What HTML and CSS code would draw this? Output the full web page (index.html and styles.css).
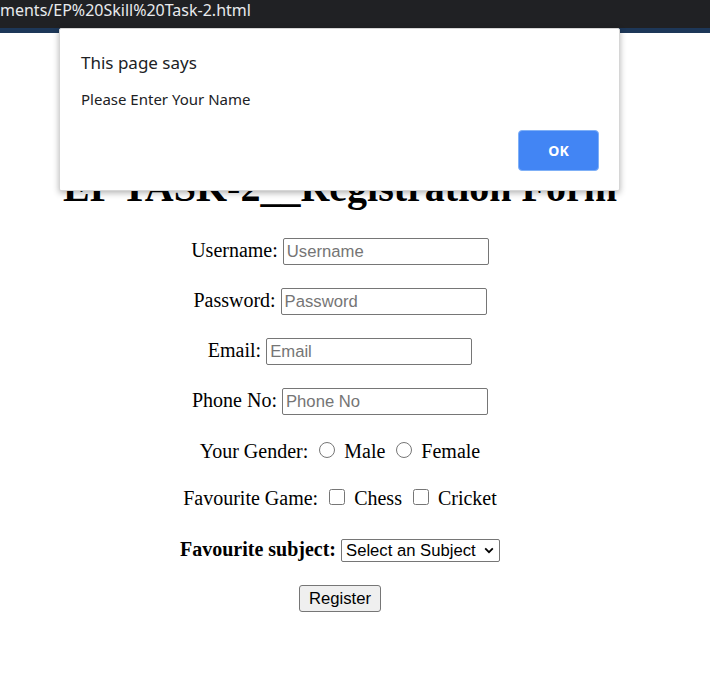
FILE: index.html
```html
<!DOCTYPE html>
<html lang="en">
<head>
<meta charset="utf-8">
<title>EP Skill Task-2</title>
<link rel="stylesheet" href="styles.css">
</head>
<body>
<div class="chrome"><span class="url">ments/EP%20Skill%20Task-2.html</span></div>
<div class="strip"></div>
<main class="page">
  <h1 class="title">EP TASK-2__Registration Form</h1>
  <form class="form">
    <p class="row row-field"><label>Username:</label> <input class="field" type="text" placeholder="Username"></p>
    <p class="row row-field"><label>Password:</label> <input class="field" type="password" placeholder="Password"></p>
    <p class="row row-field"><label>Email:</label> <input class="field" type="email" placeholder="Email"></p>
    <p class="row row-field"><label>Phone No:</label> <input class="field" type="tel" placeholder="Phone No"></p>
    <p class="row">Your Gender: <input class="radio" type="radio" name="gender"> Male <input class="radio" type="radio" name="gender"> Female</p>
    <p class="row">Favourite Game: <input class="check" type="checkbox"> Chess <input class="check" type="checkbox"> Cricket</p>
    <p class="row row-select"><b class="subject-label">Favourite subject:</b> <span class="select-wrap"><select class="select"><option>Select an Subject</option></select><svg class="chevron" width="10" height="7" viewBox="0 0 10 7"><path d="M1.2 1.4 L5 5.2 L8.8 1.4" fill="none" stroke="#000" stroke-width="1.8"/></svg></span></p>
    <p class="row row-btn"><button class="btn" type="button">Register</button></p>
  </form>
</main>
<div class="dialog">
  <div class="dialog-title">This page says</div>
  <div class="dialog-msg">Please Enter Your Name</div>
  <div class="dialog-actions"><button class="ok" type="button">OK</button></div>
</div>
</body>
</html>
```
FILE: styles.css
```css
html, body {
  margin: 0;
  padding: 0;
  background: #ffffff;
}
body {
  font-family: "Liberation Serif", "Times New Roman", serif;
  font-size: 20px;
  color: #000;
  position: relative;
  min-height: 678px;
  overflow: hidden;
}
.chrome {
  height: 28px;
  background: #202124;
  overflow: hidden;
  white-space: nowrap;
}
.url {
  display: block;
  font-family: "Noto Sans", "Open Sans", sans-serif;
  font-size: 16px;
  line-height: 21px;
  color: #e8eaed;
}
.strip {
  height: 5px;
  background: #1d3758;
}
.page {
  width: 680px;
  padding-top: 131px;
  text-align: center;
}
.title {
  font-size: 40px;
  font-weight: bold;
  margin: 0 0 27px;
}
.form {
  margin: 0;
}
.row {
  margin: 20px 0;
  line-height: 27px;
}
.row-field {
  line-height: 24px;
}
.row-select {
  line-height: 28px;
}
.subject-label {
  vertical-align: -3px;
}
.field {
  box-sizing: border-box;
  width: 206px;
  height: 27px;
  font-family: "Liberation Sans", Arial, sans-serif;
  font-size: 16.67px;
  line-height: normal;
  padding: 1px 3px;
  border: 1px solid #767676;
  border-radius: 2px;
  background: #fff;
  margin: 0 0 3px;
  vertical-align: top;
}
.field::placeholder {
  color: #757575;
}
.radio {
  width: 16px;
  height: 16px;
  margin: 4px 4px 0 6px;
}
.check {
  width: 16px;
  height: 16px;
  margin: 4px 4px 4px 6px;
}
.select-wrap {
  position: relative;
  display: inline-block;
  vertical-align: top;
  margin-top: 7px;
  height: 23px;
}
.select {
  display: block;
  appearance: none;
  -webkit-appearance: none;
  box-sizing: border-box;
  font-family: "Liberation Sans", Arial, sans-serif;
  font-size: 16.67px;
  line-height: 21px;
  width: 159px;
  height: 23px;
  padding: 0 18px 0 4px;
  border: 1px solid #767676;
  border-radius: 2px;
  background: #fff;
  color: #000;
  margin: 0;
}
.chevron {
  position: absolute;
  right: 6px;
  top: 8px;
  pointer-events: none;
}
.btn {
  font-family: "Liberation Sans", Arial, sans-serif;
  font-size: 16.67px;
  width: 82px;
  height: 27px;
  padding: 0;
  background: #efefef;
  border: 1px solid #767676;
  border-radius: 3px;
  color: #000;
  margin: 2px 0 0;
  vertical-align: top;
}
.dialog {
  position: absolute;
  left: 59px;
  top: 28px;
  width: 561px;
  height: 163px;
  box-sizing: border-box;
  background: #fff;
  border: 1px solid #d6d6d6;
  border-radius: 2px;
  box-shadow: 0 2px 6px rgba(0, 0, 0, 0.3);
  font-family: "Noto Sans", "Open Sans", sans-serif;
  color: #202124;
  padding: 22px 20px 0 21px;
}
.dialog-title {
  font-size: 17px;
  line-height: 24px;
}
.dialog-msg {
  font-size: 15px;
  line-height: 20px;
  margin-top: 14px;
}
.dialog-actions {
  display: flex;
  justify-content: flex-end;
  margin-top: 21px;
}
.ok {
  width: 81px;
  height: 41px;
  box-sizing: border-box;
  background: #4285f4;
  border: 1px solid #7fb0f7;
  border-radius: 4px;
  color: #fff;
  font-family: "Noto Sans", "Open Sans", sans-serif;
  font-size: 14px;
  font-weight: bold;
  padding: 0;
}
```
